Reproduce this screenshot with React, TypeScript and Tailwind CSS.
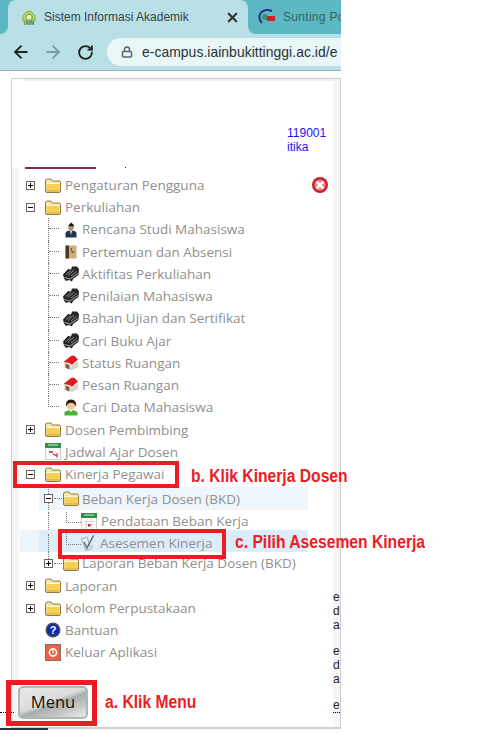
import type { ReactNode } from 'react';
import { ArrowLeft, ArrowRight, Lock, RotateCw, X } from 'lucide-react';

const Folder = () => (
  <svg width="16" height="15" viewBox="0 0 16 15" className="shrink-0">
    <path d="M0.5 3 Q0.5 1 2.5 1 H6 L7.5 3 H14 Q15.5 3 15.5 4.5 V13 Q15.5 14.5 14 14.5 H2 Q0.5 14.5 0.5 13 Z" fill="#f7e6a8" stroke="#8f7a45" />
    <path d="M1.5 6 H14.5 V13 Q14.5 13.5 14 13.5 H2 Q1.5 13.5 1.5 13 Z" fill="#f4d056" />
    <path d="M1.5 5.5 H14.5" stroke="#fffbe0" />
    <path d="M1.5 13 H14.5" stroke="#d8a93a" />
  </svg>
);

const Book = () => (
  <svg width="16" height="16" viewBox="0 0 16 16" className="shrink-0">
    <path d="M0 8.5 L5 3 L8 3.5 L9 0.5 L14 0.5 L16 3 L15.5 9 L10 13 L9 15.5 L6 14 L3 15 L1 12.5 Z" fill="#262626" />
    <path d="M3 8.5 L8 4.5 M5 9.5 L11 4 M8 10 L13.5 5.5" stroke="#8a8a8a" />
    <path d="M1.5 11.5 L7 13 L15 7.5" stroke="#a8a8a8" fill="none" />
  </svg>
);

const House = () => (
  <svg width="16" height="16" viewBox="0 0 16 16" className="shrink-0">
    <path d="M1 7 L8 9 L15 7 V12 L8 15.5 L1 12.5 Z" fill="#ece9e2" />
    <path d="M8 9 L15 7 V12 L8 15.5 Z" fill="#d8d5cd" />
    <path d="M2.5 8.5 L6.5 10 V14.5 L2.5 12.8 Z" fill="#8a5a2a" />
    <path d="M0.5 7 L8 1 L11 0.5 L15 4.5 L9 9.5 L6 8 Z" fill="#e0181f" />
  </svg>
);

const Student = () => (
  <svg width="14" height="17" viewBox="0 0 14 17" className="shrink-0">
    <path d="M0.5 16.5 V13.5 Q2 11 7 11 Q12 11 13.5 13.5 V16.5 Z" fill="#47b52f" />
    <path d="M5 11 L7 13 L9 11 Z" fill="#fff" />
    <circle cx="7" cy="6.5" r="4.2" fill="#f3c79a" />
    <path d="M2 8 Q1 0.5 7 0.5 Q13 0.5 12 8 Q11 4 7 3.8 Q3 4 2 8 Z" fill="#2f1c0c" />
  </svg>
);

const Officer = () => (
  <svg width="12" height="16" viewBox="0 0 12 16" className="shrink-0">
    <path d="M0.5 15.5 V11.5 Q0.5 8.5 6 8.5 Q11.5 8.5 11.5 11.5 V15.5 Z" fill="#22364c" />
    <circle cx="6" cy="5.5" r="2.8" fill="#b98f70" />
    <path d="M3 4 L6 0.5 L9 3 L8.5 4.5 Z" fill="#1d1d1d" />
    <path d="M5 9 L6 13 L7 9 Z" fill="#e8e8e8" />
  </svg>
);

const Ledger = () => (
  <svg width="12" height="14" viewBox="0 0 12 14" className="shrink-0">
    <rect x="0.5" y="0.5" width="11" height="13" fill="#d2ab75" />
    <rect x="0.5" y="0.5" width="3.5" height="13" fill="#4a3a28" />
    <path d="M6 3 L7.5 8 L9.5 6" stroke="#6b4f2a" fill="none" />
  </svg>
);

const Calendar = ({ big = false }: { big?: boolean }) => (
  <svg width="16" height="17" viewBox="0 0 16 17" className="shrink-0">
    <rect x="0.5" y="0.5" width="15" height="16" fill="#fafafa" stroke="#d0d0d0" />
    <rect x="0" y="0" width="16" height="5" fill="#2f8f4a" />
    <rect x="3" y="1.5" width="10" height="1" fill="#cfe8d4" />
    {big ? (
      <path d="M4 9 H8 M8 11 L11 12.5 M12 10.5 V14.5" stroke="#c8242a" strokeWidth="1.3" />
    ) : (
      <path d="M2 8.5 H14 M2 11.5 H14 M5.5 6 V16 M10.5 6 V16" stroke="#dcdcdc" />
    )}
    {!big && <rect x="7" y="11" width="2.5" height="2.5" fill="#c8242a" />}
  </svg>
);

const Assess = () => (
  <svg width="15" height="16" viewBox="0 0 15 16" className="shrink-0">
    <path d="M0.5 4 L6 2 L10 14 L5 15.5 Z" fill="#e8ecef" stroke="#a4aeb6" />
    <path d="M3 7 L6 13 L12.5 0.5" stroke="#5d6f80" strokeWidth="1.5" fill="none" />
    <path d="M8 12 L13 9 L11 15 Z" fill="#c7d0d8" />
  </svg>
);

const Help = () => (
  <svg width="16" height="16" viewBox="0 0 16 16" className="shrink-0">
    <circle cx="8" cy="8" r="7.5" fill="#4a4f5c" />
    <circle cx="8" cy="8" r="6" fill="#1029a8" />
    <text x="8" y="12" textAnchor="middle" fontSize="11" fontWeight="700" fill="#fff" fontFamily="Liberation Sans, sans-serif">?</text>
  </svg>
);

const Logout = () => (
  <svg width="16" height="17" viewBox="0 0 16 17" className="shrink-0">
    <rect x="0.5" y="0.5" width="15" height="16" fill="#e8633f" stroke="#8f6a60" />
    <circle cx="8" cy="8.5" r="3.6" fill="none" stroke="#fff" strokeWidth="1.6" />
    <path d="M8 5.5 V9.5" stroke="#fff" strokeWidth="1.2" />
  </svg>
);

const CloseIcon = () => (
  <svg width="16" height="16" viewBox="0 0 16 16" className="ml-auto mr-[5px] shrink-0">
    <circle cx="8" cy="8" r="8" fill="#c8202c" />
    <circle cx="8" cy="8" r="5.6" fill="#e58a8e" />
    <path d="M4.8 4.8 L11.2 11.2 M11.2 4.8 L4.8 11.2" stroke="#fff" strokeWidth="2.4" />
  </svg>
);

// plus or minus box of the tree
const Toggle = ({ open }: { open: boolean }) => (
  <span className="flex h-[9px] w-[9px] shrink-0 items-center justify-center border border-[#666] bg-white">
    <svg width="5" height="5" viewBox="0 0 5 5">
      <path d={open ? 'M0 2.5 H5' : 'M0 2.5 H5 M2.5 0 V5'} stroke="#000" />
    </svg>
  </span>
);

const Annotation = ({ className = '', children }: { className?: string; children: ReactNode }) => (
  <span className={`shrink-0 origin-left scale-x-[.87] whitespace-nowrap font-['Liberation_Sans',sans-serif] text-[18px] font-bold leading-none text-[#ed1c24] ${className}`}>
    {children}
  </span>
);

interface RowProps {
  icon: ReactNode;
  label: string;
  toggle?: boolean;
  open?: boolean;
  children?: ReactNode;
}

const TopRow = ({ icon, label, toggle, open, children }: RowProps) => (
  <div className="flex h-[22.24px] items-center pl-[7px]">
    <span className="w-[19px] shrink-0">{toggle !== undefined && <Toggle open={!!open} />}</span>
    <span className="w-[20px] shrink-0">{icon}</span>
    <span className="shrink-0 whitespace-nowrap">{label}</span>
    {children}
  </div>
);

const ChildRow = ({ icon, label, last }: { icon: ReactNode; label: string; last?: boolean }) => (
  <div className="flex h-[22.24px] items-center pl-[29px]">
    <span className={`mr-[3px] w-[11px] shrink-0 self-stretch border-dotted border-[#777] ${last ? '' : 'border-l'}`}>
      <span className={`block h-[11px] border-b border-dotted border-[#777] ${last ? 'border-l' : ''}`} />
    </span>
    <span className="mr-[2px] flex w-[18px] shrink-0 justify-center">{icon}</span>
    <span className="whitespace-nowrap">{label}</span>
  </div>
);

// second level folder, with the dotted line running through its box
const SubFolder = ({ label, open, className }: { label: string; open: boolean; className: string }) => (
  <div className={`ml-[20px] mr-[25px] flex items-center pl-[5px] ${className}`}>
    <span className="flex w-[9px] shrink-0 flex-col items-center self-stretch">
      <span className="flex-1 border-l border-dotted border-[#777]" />
      <Toggle open={open} />
      <span className={`flex-1 border-dotted border-[#777] ${open ? 'border-l' : ''}`} />
    </span>
    <span className="mx-[1px] w-[8px] shrink-0 border-t border-dotted border-[#777]" />
    <span className="w-[19px] shrink-0"><Folder /></span>
    <span className="whitespace-nowrap">{label}</span>
  </div>
);

const SubChild = ({ icon, label, iconWidth, className, children }: { icon: ReactNode; label: string; iconWidth: string; className: string; children?: ReactNode }) => (
  <div className={`mr-[25px] flex items-center ${className}`}>
    <span className="w-[18px] shrink-0 self-stretch border-l border-dotted border-[#777]" />
    <span className="w-[15px] shrink-0 self-stretch">
      <span className="block h-[11px] border-b border-l border-dotted border-[#777]" />
    </span>
    <span className={`shrink-0 ${iconWidth}`}>{icon}</span>
    <span className="shrink-0 whitespace-nowrap">{label}</span>
    {children}
  </div>
);

export default function App() {
  return (
    <div className="relative flex h-[756px] w-[500px] flex-col overflow-hidden bg-white font-['Open_Sans',sans-serif] text-[13.5px] text-[#8f8f8f]">
      {/* browser chrome */}
      <div className="h-[71px] w-[341px] shrink-0 overflow-hidden border-b border-[#8fb3b8] bg-[#b8e0e6]">
        <div className="flex h-[34px] bg-[linear-gradient(#5cb8c2_10px,#b8e0e6_10px)]">
          <div className="w-[8px] shrink-0 rounded-br-[8px] bg-[#5cb8c2]" />
          <div className="flex h-[34px] w-[240px] shrink-0 items-center rounded-t-[8px] bg-[#b8e0e6] pl-[13px] pr-[8px] font-['Liberation_Sans',sans-serif] text-[12px] text-[#3c4043]">
            <svg width="16" height="16" viewBox="0 0 16 16" className="shrink-0">
              <path d="M2 12 V7 Q8 -3 14 7 V12 Z" fill="#b9d86a" stroke="#7fb24a" />
              <path d="M5 11 V7 Q8 3 11 7 V11 Z" fill="#e6f2c2" stroke="#5f9a35" />
              <text x="8" y="15.5" textAnchor="middle" fontSize="5" fontWeight="700" fill="#3f6a22" fontFamily="Liberation Sans, sans-serif">IAIN</text>
            </svg>
            <span className="ml-[7px] flex-1 whitespace-nowrap">Sistem Informasi Akademik</span>
            <X size={15} strokeWidth={3.4} className="text-[#333]" />
          </div>
          <div className="flex flex-1 items-center overflow-hidden rounded-bl-[8px] bg-[#5cb8c2] pl-[10px] font-['Liberation_Sans',sans-serif] text-[12px] tracking-[.3px] text-[#35616a]">
            <svg width="17" height="16" viewBox="0 0 17 16" className="shrink-0">
              <path d="M14 2 Q6 -1 2 5 Q0 10 4 14" fill="none" stroke="#2b2f8c" strokeWidth="2" />
              <circle cx="7" cy="8" r="3" fill="#3d8f6a" />
              <rect x="9" y="7" width="8" height="5" fill="#c8242a" />
            </svg>
            <span className="ml-[8px] whitespace-nowrap">Sunting Po</span>
          </div>
        </div>
        <div className="flex h-[36px] items-center pl-[11px]">
          <ArrowLeft size={20} strokeWidth={2.2} className="text-[#222]" />
          <ArrowRight size={20} strokeWidth={2.2} className="ml-[12px] text-[#7f9a9f]" />
          <RotateCw size={17} strokeWidth={2.6} className="ml-[14px] text-[#222]" />
          <div className="ml-[13px] flex h-[28px] flex-1 items-center overflow-hidden rounded-l-[14px] bg-[#e9f6f7] pl-[14px] font-['Liberation_Sans',sans-serif] text-[13.9px] text-[#263238]">
            <Lock size={12} strokeWidth={3} className="shrink-0 text-[#5f6368]" />
            <span className="ml-[9px] whitespace-nowrap tracking-[.05px]">e-campus.iainbukittinggi.ac.id/e</span>
          </div>
        </div>
      </div>

      {/* page frame */}
      <div className="ml-[11px] mt-[7px] flex h-[651px] w-[330px] shrink-0 border border-b-2 border-[#cfcfcf] bg-white">
        <div className="flex min-w-0 flex-1 flex-col">
          <div className="ml-[12px] h-[2px] bg-[#eeeeee]" />
          <div className="h-[86px] pl-[275px] pt-[45px] font-['Liberation_Sans',sans-serif] text-[12px] leading-[14px] text-[#1a14f0]">
            <div>119001</div>
            <div>itika</div>
          </div>

          <div className="flex flex-1">
            <div className="w-[7px] shrink-0 bg-[#f6f6f6]" />
            <div className="min-w-0 flex-1">
              <div className="flex items-start pl-[6px]">
                <div className="h-[2px] w-[71px] bg-[#8a2c50]" />
                <div className="ml-[29px] h-px w-px bg-[#1a14f0]" />
              </div>

              {/* menu tree */}
              <div className="mt-[5px]">
                <TopRow icon={<Folder />} label="Pengaturan Pengguna" toggle open={false}>
                  <CloseIcon />
                </TopRow>
                <TopRow icon={<Folder />} label="Perkuliahan" toggle open />
                <ChildRow icon={<Officer />} label="Rencana Studi Mahasiswa" />
                <ChildRow icon={<Ledger />} label="Pertemuan dan Absensi" />
                <ChildRow icon={<Book />} label="Aktifitas Perkuliahan" />
                <ChildRow icon={<Book />} label="Penilaian Mahasiswa" />
                <ChildRow icon={<Book />} label="Bahan Ujian dan Sertifikat" />
                <ChildRow icon={<Book />} label="Cari Buku Ajar" />
                <ChildRow icon={<House />} label="Status Ruangan" />
                <ChildRow icon={<House />} label="Pesan Ruangan" />
                <ChildRow icon={<Student />} label="Cari Data Mahasiswa" last />
                <TopRow icon={<Folder />} label="Dosen Pembimbing" toggle open={false} />
                <TopRow icon={<Calendar big />} label="Jadwal Ajar Dosen" />
                <TopRow icon={<Folder />} label="Kinerja Pegawai" toggle open>
                  <Annotation className="ml-[27px] mt-[4px]">b. Klik Kinerja Dosen</Annotation>
                </TopRow>
                <SubFolder label="Beban Kerja Dosen (BKD)" open className="mt-[2px] h-[23px] bg-[#eef6fc]" />
                <SubChild icon={<Calendar />} label="Pendataan Beban Kerja" iconWidth="w-[20px]" className="ml-[20px] h-[20px] pl-[9px] pt-[2px]" />
                <SubChild icon={<Assess />} label="Asesemen Kinerja" iconWidth="w-[19px]" className="ml-[1px] h-[22px] bg-[linear-gradient(90deg,#ecf5fc_19px,#dcecf8_19px)] pl-[28px] pt-[4px]">
                  <Annotation className="-mt-[2px] ml-[23px]">c. Pilih Asesemen Kinerja</Annotation>
                </SubChild>
                <SubFolder label="Laporan Beban Kerja Dosen (BKD)" open={false} className="h-[22.5px]" />
                <TopRow icon={<Folder />} label="Laporan" toggle open={false} />
                <TopRow icon={<Folder />} label="Kolom Perpustakaan" toggle open={false} />
                <TopRow icon={<Help />} label="Bantuan" />
                <TopRow icon={<Logout />} label="Keluar Aplikasi" />
              </div>

              <div className="-ml-px mt-[22px] flex items-center">
                <button
                  type="button"
                  className="flex h-[33px] w-[70px] shrink-0 items-center justify-center rounded-[5px] border-2 border-[#a9b8bb] bg-[linear-gradient(160deg,#e8e8e8_0%,#dcdcdc_45%,#a9adab_55%,#e9e9e9_100%)] text-[16.5px] text-[#111]"
                >
                  Menu
                </button>
                <Annotation className="ml-[17px]">a. Klik Menu</Annotation>
              </div>
            </div>
          </div>
        </div>

        {/* cut off text of the page behind the menu */}
        <div className="w-[7px] shrink-0 overflow-hidden bg-[#f6f6f6] pt-[511px] font-['Liberation_Sans',sans-serif] text-[12px] leading-[14px] text-[#222]">
          <div>e</div>
          <div>d</div>
          <div>a</div>
          <div className="h-[12px]" />
          <div>e</div>
          <div>d</div>
          <div>a</div>
          <div className="h-[12px]" />
          <div>e</div>
          <div className="border-t border-dotted border-black" />
        </div>
      </div>
      <div className="-mt-px h-[2px] w-[48px] shrink-0 bg-[#26343c]" />

      {/* overlays drawn on top of the screenshot */}
      <div className="absolute left-0 top-[712px] w-[14px] border-t border-dotted border-black" />
      <div className="absolute left-[13px] top-[461px] h-[27px] w-[166px] border-[4px] border-[#ed1c24]" />
      <div className="absolute left-[58px] top-[529px] h-[30px] w-[168px] border-[4px] border-[#ed1c24]" />
      <div className="absolute left-[6px] top-[680px] h-[46px] w-[91px] border-[5px] border-[#ed1c24]" />
    </div>
  );
}
